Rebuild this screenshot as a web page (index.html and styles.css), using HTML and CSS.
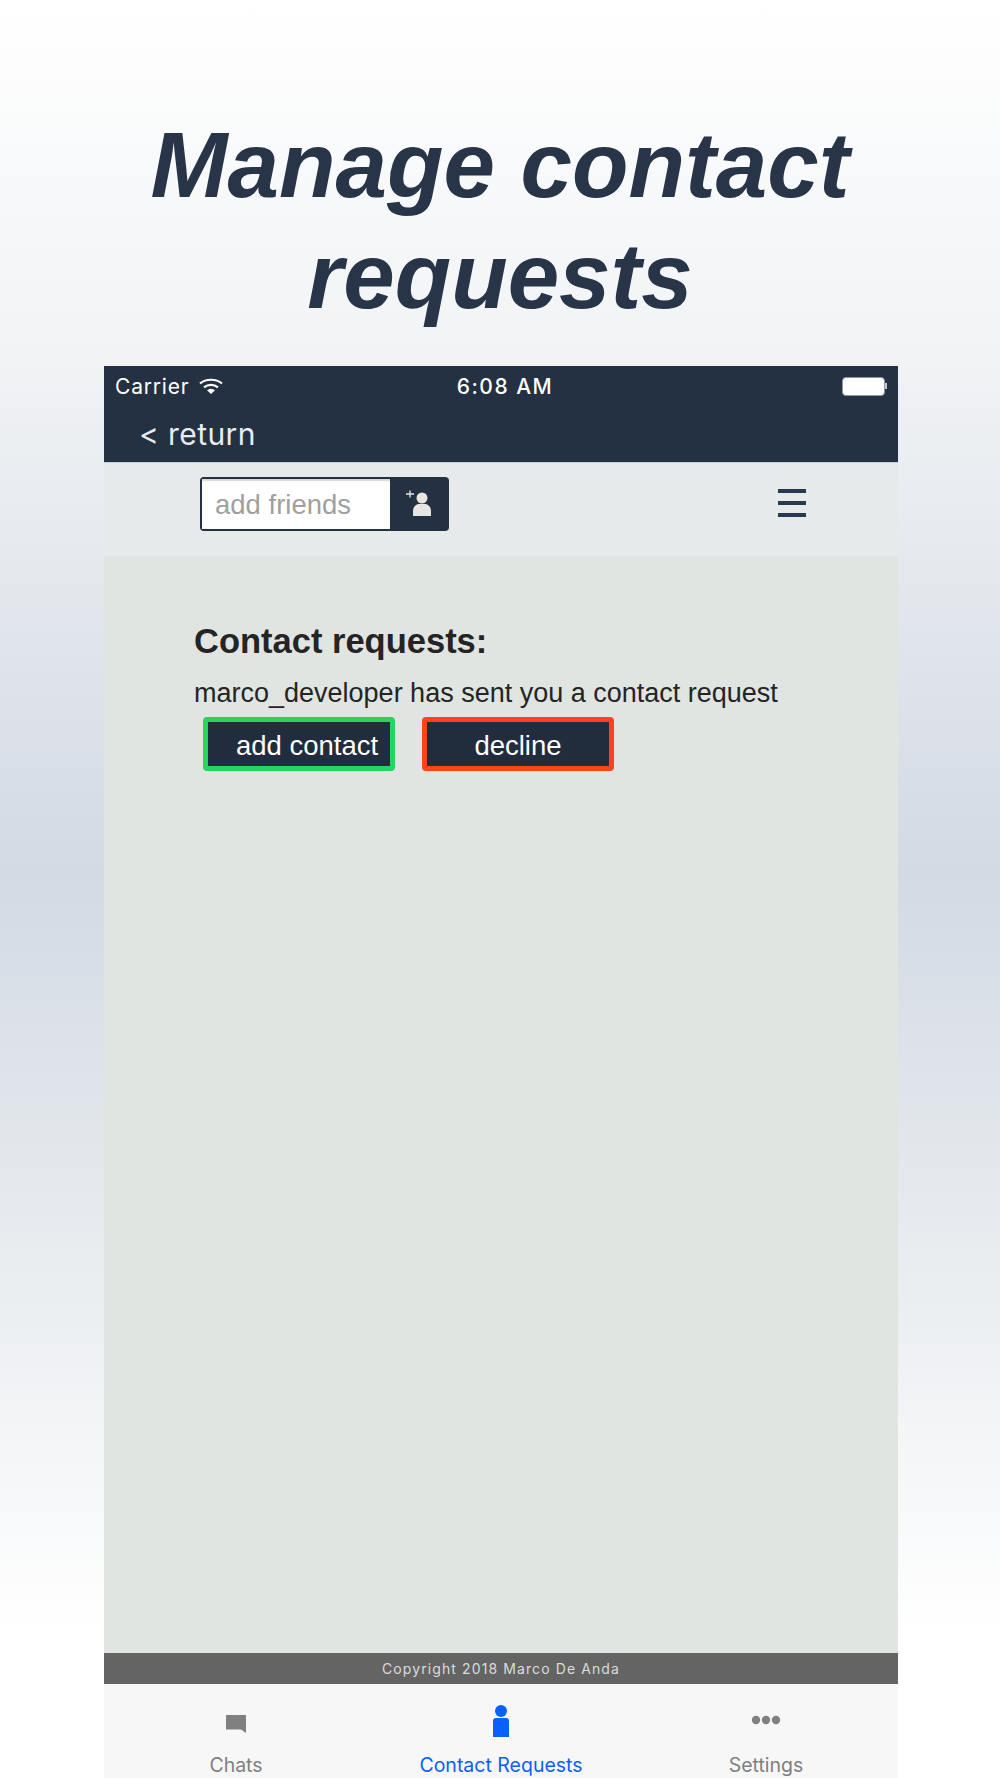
FILE: index.html
```html
<!DOCTYPE html>
<html lang="en">
<head>
    <meta charset="UTF-8">
    <title>Manage contact requests</title>
    <link rel="stylesheet" href="styles.css">
</head>
<body>
    <h1 class="headline">Manage contact<br>requests</h1>

    <div class="phone">
        <!-- Status bar -->
        <div class="status-bar">
            <div class="status-left">
                <span>Carrier</span>
                <svg class="wifi" width="24" height="17" viewBox="0 0 24 17">
                    <path d="M1 5.500C7 .5 17 .5 23 5.500" fill="none" stroke="#fff" stroke-width="2.200"/>
                    <path d="M5 9.300C9 6 15 6 19 9.300" fill="none" stroke="#fff" stroke-width="2.200"/>
                    <path d="M8 12.200C10.500 10.200 13.500 10.200 16 12.200L12 16z" fill="#fff"/>
                </svg>
            </div>
            <div class="status-time">6:08 AM</div>
            <div class="status-right">
                <span class="battery"></span><span class="battery-tip"></span>
            </div>
        </div>

        <div class="nav-bar">&lt; return</div>

        <!-- Search and menu -->
        <div class="toolbar">
            <div class="add-friends">
                <div class="add-input">add friends</div>
                <div class="add-btn">
                    <svg width="30" height="30" viewBox="0 0 30 30">
                        <path d="M1 5h8M5 1.500v7" stroke="#e8e6e1" stroke-width="1.300" fill="none"/>
                        <circle cx="17" cy="9" r="5.500" fill="#e8e6e1"/>
                        <path d="M8 27v-5c0-4 3-7 6-7h6c3 0 6 3 6 7v5z" fill="#e8e6e1"/>
                    </svg>
                </div>
            </div>
            <div class="menu-icon"><span></span><span></span><span></span></div>
        </div>

        <div class="content">
            <h2>Contact requests:</h2>
            <p>marco_developer has sent you a contact request</p>
            <div class="actions">
                <button class="btn btn-add">add contact</button>
                <button class="btn btn-decline">decline</button>
            </div>
        </div>

        <div class="copyright">Copyright 2018 Marco De Anda</div>

        <!-- Tabs -->
        <div class="tab-bar">
            <div class="tab">
                <svg class="tab-icon" width="20" height="18" viewBox="0 0 20 18">
                    <path d="M0 0H20V18L15 14.500H0z" fill="#808080"/>
                </svg>
                <span>Chats</span>
            </div>
            <div class="tab active">
                <svg class="tab-icon" width="16" height="32" viewBox="0 0 16 32">
                    <circle cx="8" cy="6" r="6" fill="#0a60ff"/>
                    <path d="M0 32V16c0-2 1-3 3-3h10c2 0 3 1 3 3v16z" fill="#0a60ff"/>
                </svg>
                <span>Contact Requests</span>
            </div>
            <div class="tab">
                <svg class="tab-icon" width="30" height="10" viewBox="0 0 30 10">
                    <circle cx="5" cy="5" r="4.200" fill="#808080"/>
                    <circle cx="15" cy="5" r="4.200" fill="#808080"/>
                    <circle cx="25" cy="5" r="4.200" fill="#808080"/>
                </svg>
                <span>Settings</span>
            </div>
        </div>
    </div>
</body>
</html>
```

FILE: styles.css
```css
body {
    margin: 0;
    height: 1778px;
    overflow: hidden;
    font-family: "Liberation Sans", Arial, sans-serif;
    background: linear-gradient(to bottom, #ffffff 0%, #f1f3f5 20%, #d3dae4 49%, #e6eaee 68%, #ffffff 92%);
    display: flex;
    flex-direction: column;
    align-items: center;
}

.headline {
    margin: 0;
    padding-top: 110px;
    height: 256px;
    box-sizing: border-box;
    font-size: 92.500px;
    line-height: 111px;
    font-style: italic;
    font-weight: bold;
    text-align: center;
    color: #283548;
    white-space: nowrap;
}

.phone {
    width: 794px;
    flex: 1;
    margin: 110px 0 0 2px;
    display: flex;
    flex-direction: column;
}

/* Status bar */
.status-bar {
    height: 40px;
    padding: 0 11px 0 11px;
    background-color: #233142;
    color: #fff;
    font-family: Inter, sans-serif;
    font-size: 21px;
    display: grid;
    grid-template-columns: 1fr auto 1fr;
    align-items: center;
}

.status-left {
    display: flex;
    align-items: center;
    gap: 10px;
    letter-spacing: 0.8px;
}

.status-time {
    margin-left: 8px;
    font-weight: 500;
    letter-spacing: 1.500px;
}

.status-right {
    display: flex;
    align-items: center;
    justify-content: flex-end;
}

.battery {
    width: 43px;
    height: 19px;
    box-sizing: border-box;
    background-color: #fff;
    border: 1px solid #8d97a3;
    border-radius: 4px;
}

.battery-tip {
    width: 2px;
    height: 6px;
    background-color: #c4c9d0;
}

.nav-bar {
    height: 56px;
    padding-left: 35px;
    background-color: #233142;
    color: #e9ecef;
    font-family: Inter, sans-serif;
    font-size: 30px;
    letter-spacing: 0.4px;
    line-height: 56px;
    box-sizing: border-box;
}

/* Toolbar */
.toolbar {
    height: 94px;
    background-color: #e6eaea;
    border-top: 1px solid #c9cfd4;
    box-sizing: border-box;
    display: flex;
    align-items: flex-start;
}

.add-friends {
    width: 249px;
    height: 54px;
    margin: 14px 0 0 96px;
    background-color: #233142;
    border-radius: 4px;
    display: flex;
}

.add-input {
    width: 188px;
    height: 50px;
    margin: 2px 0 0 2px;
    padding-left: 13px;
    box-sizing: border-box;
    background-color: #fff;
    box-shadow: inset 0 2px 1px #d8d8d8;
    color: #a0a0a0;
    font-size: 27.500px;
    line-height: 52px;
}

.add-btn {
    flex: 1;
    display: flex;
    align-items: center;
    justify-content: center;
}

.menu-icon {
    width: 28px;
    margin: 26px 0 0 329px;
    display: flex;
    flex-direction: column;
    gap: 8px;
}

.menu-icon span {
    height: 4px;
    background-color: #283a50;
}

/* Content */
.content {
    flex: 1;
    padding: 66px 0 0 90px;
    background-color: #e0e5e1;
    color: #242424;
}

.content h2 {
    margin: 0;
    font-size: 34.500px;
    line-height: 38px;
}

.content p {
    margin: 16px 0 0;
    font-size: 27px;
    line-height: 34px;
}

.actions {
    display: flex;
    gap: 27px;
    margin: 7px 0 0 9px;
}

.btn {
    width: 192px;
    height: 54px;
    padding: 4px 0 0;
    background-color: #212d3d;
    color: #fff;
    font-family: "Liberation Sans", Arial, sans-serif;
    font-size: 27.500px;
    border: 5px solid;
    border-radius: 4px;
}

.btn-add {
    border-color: #28d45c;
    padding-left: 28px;
    text-align: left;
}

.btn-decline {
    border-color: #fc431b;
}

.copyright {
    height: 31px;
    background-color: #646464;
    color: #dcdcdc;
    font-family: Inter, sans-serif;
    font-size: 14px;
    letter-spacing: 1.100px;
    line-height: 31px;
    text-align: center;
}

/* Tab bar */
.tab-bar {
    height: 94px;
    background-color: #f7f7f7;
    display: grid;
    grid-template-columns: 264px 266px 264px;
}

.tab {
    position: relative;
    padding-bottom: 1px;
    color: #808080;
    font-family: Inter, sans-serif;
    font-size: 19.500px;
    display: flex;
    flex-direction: column;
    align-items: center;
    justify-content: flex-end;
}

.tab-icon {
    position: absolute;
    top: 31px;
}

.tab.active {
    color: #0a60ff;
}

.tab.active .tab-icon {
    top: 21px;
}
```
